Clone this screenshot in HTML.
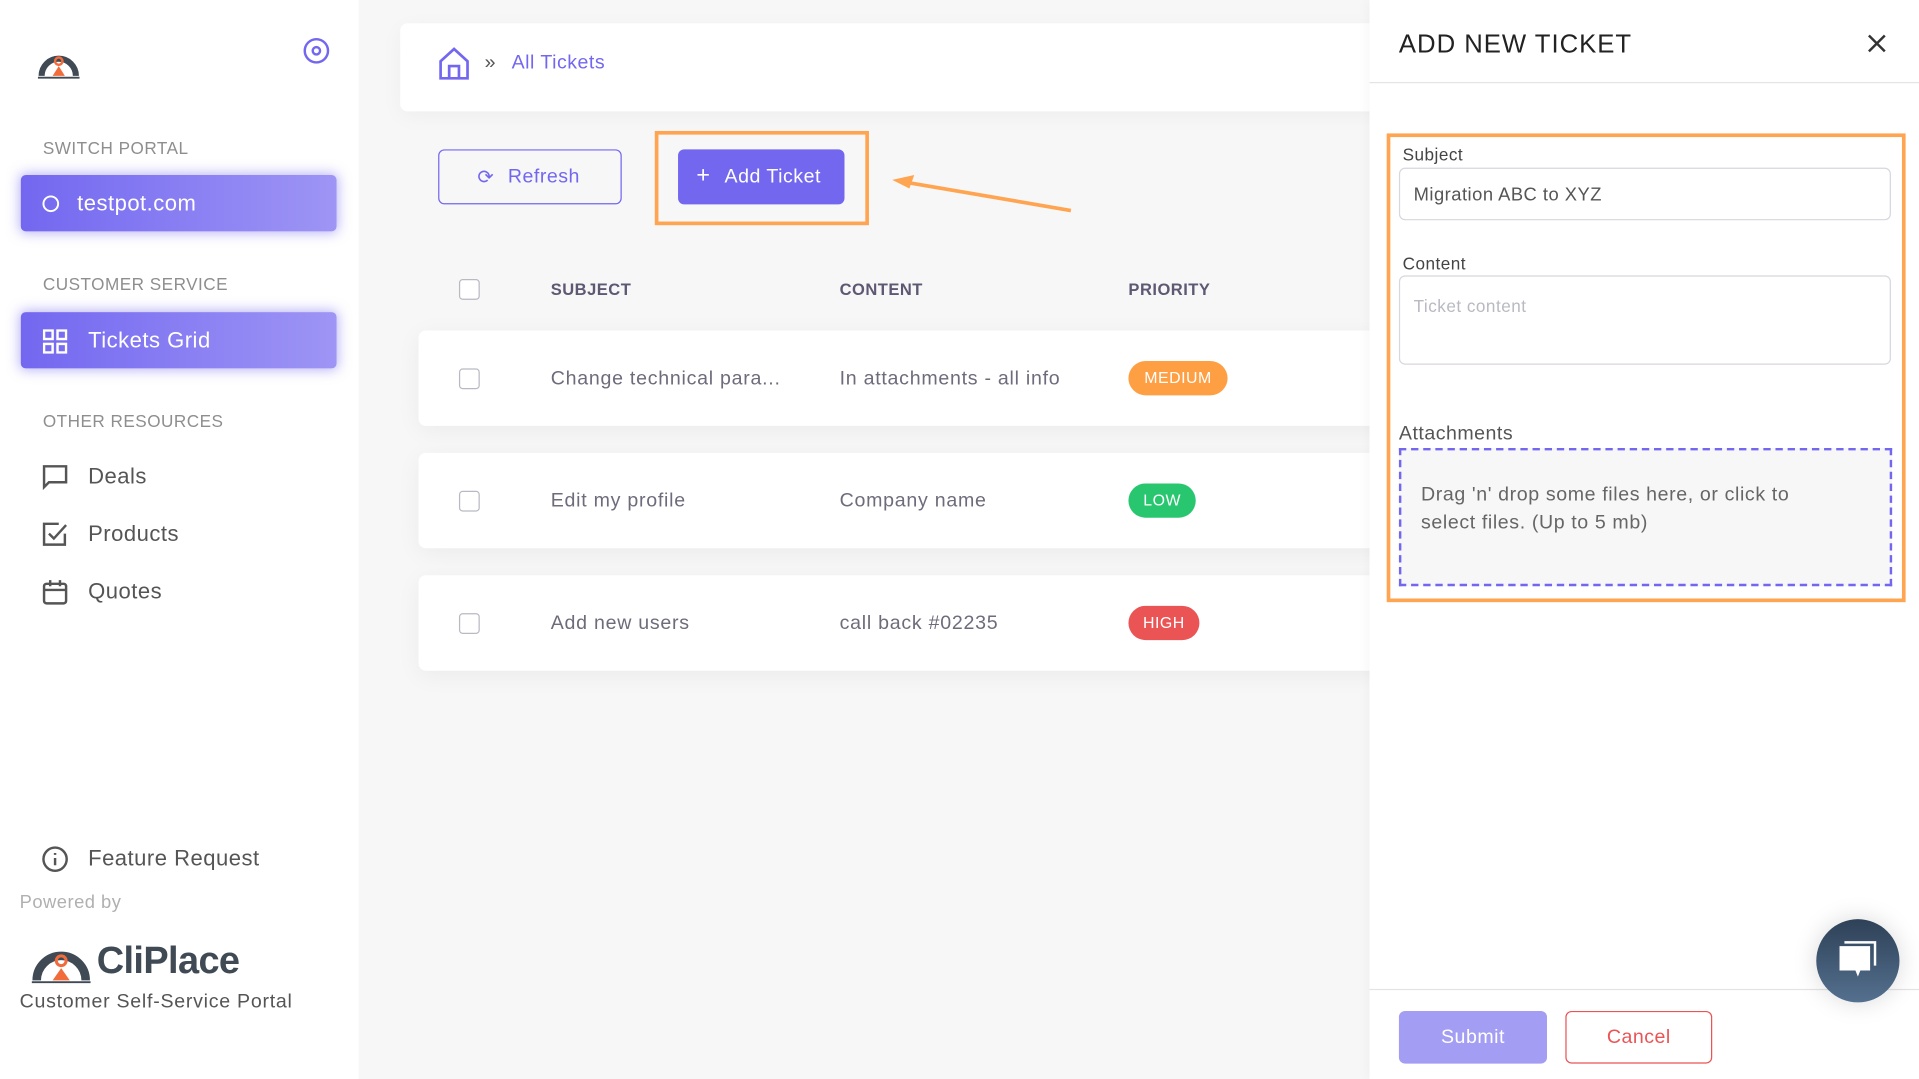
<!DOCTYPE html>
<html><head><meta charset="utf-8"><style>
*{box-sizing:border-box;margin:0;padding:0}
html,body{width:1919px;height:1079px;overflow:hidden;background:#f7f7f7}
#s{position:absolute;left:0;top:0;width:1568px;height:882px;transform:scale(1.2239);transform-origin:0 0;font-family:"Liberation Sans",sans-serif;color:#444;letter-spacing:.4px}
.a{position:absolute}
.side{left:0;top:0;width:293px;height:882px;background:#fff}
.lab{font-size:14px;color:#8e8e8e;letter-spacing:.4px}
.pill{left:17px;width:258px;height:46px;border-radius:4px;background:linear-gradient(90deg,#7367f0,#9e95f5);box-shadow:0 0 10px 1px rgba(115,103,240,.5);color:#fff;font-size:18px}
.nav{font-size:18px;color:#555}
.card{background:#fff;border-radius:6px}
.cb{width:17px;height:17px;border:1.5px solid #b9b9c3;border-radius:3px;background:#fff}
.cell{font-size:16px;color:#6e6b7b;letter-spacing:.6px}
.th{font-size:13.5px;font-weight:bold;color:#5e5873;letter-spacing:.4px}
.badge{height:28px;border-radius:14px;color:#fff;font-size:13px;line-height:28px;text-align:center}
</style></head><body><div id="s">
<div class="a side"></div>
<svg class="a" style="left:30px;top:39px" width="36" height="26" viewBox="0 0 36 26"><path d="M4 23 A14 14 0 0 1 32 23" fill="none" stroke="#3f4a55" stroke-width="5"/><circle cx="18" cy="11" r="3" fill="none" stroke="#f26b3a" stroke-width="2"/><path d="M13 23 L18 15 L23 23Z" fill="#f26b3a"/><path d="M1 24.5 H35" stroke="#3f4a55" stroke-width="1.5"/></svg>
<svg class="a" style="left:247px;top:30px" width="23" height="23" viewBox="0 0 23 23"><circle cx="11.5" cy="11.5" r="9.5" fill="none" stroke="#7367f0" stroke-width="2"/><circle cx="11.5" cy="11.5" r="3" fill="none" stroke="#7367f0" stroke-width="2"/></svg>
<div class="a lab" style="left:35px;top:113px">SWITCH PORTAL</div>
<div class="a pill" style="top:143px"><svg class="a" style="left:17px;top:16px" width="15" height="15"><circle cx="7.5" cy="7.5" r="6" fill="none" stroke="#fff" stroke-width="1.6"/></svg><span class="a" style="left:46px;top:13px">testpot.com</span></div>
<div class="a lab" style="left:35px;top:224px">CUSTOMER SERVICE</div>
<div class="a pill" style="top:255px"><svg class="a" style="left:18px;top:14px" width="20" height="20" fill="none" stroke="#fff" stroke-width="2"><rect x="1" y="1" width="7" height="7"/><rect x="12" y="1" width="7" height="7"/><rect x="1" y="12" width="7" height="7"/><rect x="12" y="12" width="7" height="7"/></svg><span class="a" style="left:55px;top:13px">Tickets Grid</span></div>
<div class="a lab" style="left:35px;top:336px">OTHER RESOURCES</div>
<svg class="a" style="left:34px;top:379px" width="22" height="22" fill="none" stroke="#555" stroke-width="2"><path d="M2 2H20V15H6L2 19Z"/></svg>
<div class="a nav" style="left:72px;top:379px">Deals</div>
<svg class="a" style="left:34px;top:426px" width="22" height="22" fill="none" stroke="#555" stroke-width="2"><path d="M19 10V19H2V2H14"/><path d="M6 10L10 14L20 3"/></svg>
<div class="a nav" style="left:72px;top:426px">Products</div>
<svg class="a" style="left:34px;top:473px" width="22" height="22" fill="none" stroke="#555" stroke-width="2"><rect x="2" y="4" width="18" height="16" rx="2"/><path d="M2 9H20M7 1V6M15 1V6"/></svg>
<div class="a nav" style="left:72px;top:473px">Quotes</div>
<svg class="a" style="left:34px;top:691px" width="22" height="22" fill="none" stroke="#555" stroke-width="2"><circle cx="11" cy="11" r="9.5"/><path d="M11 10V16M11 6V7.5"/></svg>
<div class="a nav" style="left:72px;top:691px">Feature Request</div>
<div class="a" style="left:16px;top:729px;font-size:15px;color:#b0b0b0">Powered by</div>
<svg class="a" style="left:24px;top:767px" width="52" height="38" viewBox="0 0 52 38"><path d="M6 34 A20 20 0 0 1 46 34" fill="none" stroke="#3f4a55" stroke-width="7"/><circle cx="26" cy="18" r="4" fill="none" stroke="#f26b3a" stroke-width="2.5"/><path d="M19 34 L26 24 L33 34Z" fill="#f26b3a"/><path d="M2 35.5H50" stroke="#3f4a55" stroke-width="1.5"/></svg>
<div class="a" style="left:79px;top:767px;font-size:31px;font-weight:bold;color:#3f4a55;letter-spacing:-.5px">CliPlace</div>
<div class="a" style="left:16px;top:810px;font-size:16px;color:#555;letter-spacing:.6px">Customer Self-Service Portal</div>

<div class="a card" style="left:327px;top:19px;width:820px;height:72px;box-shadow:0 4px 18px rgba(0,0,0,.04)"></div>
<svg class="a" style="left:358px;top:38px" width="26" height="28" fill="none" stroke="#7367f0" stroke-width="2.2"><path d="M2 12L13 2L24 12V26H2Z"/><path d="M9 26V16H17V26"/></svg>
<div class="a" style="left:396px;top:43px;font-size:16px;color:#555">»</div>
<div class="a" style="left:418px;top:43px;font-size:16px;color:#7367f0">All Tickets</div>
<div class="a" style="left:358px;top:122px;width:150px;height:45px;border:1px solid #7367f0;border-radius:5px;color:#7367f0;font-size:16px"><span class="a" style="left:31px;top:12px">⟳</span><span class="a" style="left:56px;top:13px">Refresh</span></div>
<div class="a" style="left:535px;top:107px;width:175px;height:77px;border:3px solid #ffa552"></div>
<div class="a" style="left:554px;top:122px;width:136px;height:45px;background:#7367f0;border-radius:5px;color:#fff;font-size:16px"><span class="a" style="left:15px;top:11px;font-size:19px">+</span><span class="a" style="left:38px;top:14px">Add Ticket</span></div>
<svg class="a" style="left:725px;top:138px" width="155" height="40"><path d="M150 34L10 10" stroke="#ffa552" stroke-width="3"/><path d="M4 9L22 5L18 16Z" fill="#ffa552"/></svg>
<div class="a cb" style="left:375px;top:228px"></div>
<div class="a th" style="left:450px;top:229px">SUBJECT</div>
<div class="a th" style="left:686px;top:229px">CONTENT</div>
<div class="a th" style="left:922px;top:229px">PRIORITY</div>
<div class="a card" style="left:342px;top:270px;width:800px;height:78px;box-shadow:0 4px 20px rgba(0,0,0,.05)"></div>
<div class="a card" style="left:342px;top:370px;width:800px;height:78px;box-shadow:0 4px 20px rgba(0,0,0,.05)"></div>
<div class="a card" style="left:342px;top:470px;width:800px;height:78px;box-shadow:0 4px 20px rgba(0,0,0,.05)"></div>
<div class="a cb" style="left:375px;top:301px"></div><div class="a cell" style="left:450px;top:301px">Change technical para...</div><div class="a cell" style="left:686px;top:301px">In attachments - all info</div><div class="a badge" style="left:922px;top:295px;width:81px;background:#ff9f43">MEDIUM</div>
<div class="a cb" style="left:375px;top:401px"></div><div class="a cell" style="left:450px;top:401px">Edit my profile</div><div class="a cell" style="left:686px;top:401px">Company name</div><div class="a badge" style="left:922px;top:395px;width:55px;background:#28c76f">LOW</div>
<div class="a cb" style="left:375px;top:501px"></div><div class="a cell" style="left:450px;top:501px">Add new users</div><div class="a cell" style="left:686px;top:501px">call back #02235</div><div class="a badge" style="left:922px;top:495px;width:58px;background:#ea5455">HIGH</div>

<div class="a" style="left:1119px;top:0;width:449px;height:882px;background:#fff;box-shadow:-3px 0 8px rgba(0,0,0,.03)"></div>
<div class="a" style="left:1143px;top:25px;font-size:21px;color:#222;letter-spacing:.8px">ADD NEW TICKET</div>
<svg class="a" style="left:1526px;top:28px" width="15" height="15" stroke="#333" stroke-width="2"><path d="M1 1L14 14M14 1L1 14"/></svg>
<div class="a" style="left:1119px;top:67px;width:449px;height:1px;background:#e4e4e4"></div>
<div class="a" style="left:1133px;top:109px;width:424px;height:383px;border:3px solid #ffa552"></div>
<div class="a" style="left:1146px;top:118px;font-size:14px;color:#444">Subject</div>
<div class="a" style="left:1143px;top:137px;width:402px;height:43px;border:1px solid #d8d6de;border-radius:5px"></div>
<div class="a" style="left:1155px;top:151px;font-size:15px;color:#555">Migration ABC to XYZ</div>
<div class="a" style="left:1146px;top:207px;font-size:14px;color:#444">Content</div>
<div class="a" style="left:1143px;top:225px;width:402px;height:73px;border:1px solid #d8d6de;border-radius:5px"></div>
<div class="a" style="left:1155px;top:242px;font-size:14px;color:#b9b9c3">Ticket content</div>
<div class="a" style="left:1143px;top:346px;font-size:16px;color:#555">Attachments</div>
<div class="a" style="left:1143px;top:366px;width:403px;height:113px;border:2px dashed #7367f0;background:#f7f7f7"></div>
<div class="a" style="left:1161px;top:393px;width:340px;font-size:16px;line-height:23px;color:#666;letter-spacing:.5px">Drag 'n' drop some files here, or click to select files. (Up to 5 mb)</div>
<div class="a" style="left:1119px;top:808px;width:449px;height:1px;background:#e4e4e4"></div>
<div class="a" style="left:1143px;top:826px;width:121px;height:43px;border-radius:5px;background:#a49df4;color:#fff;font-size:16px;text-align:center;line-height:43px">Submit</div>
<div class="a" style="left:1279px;top:826px;width:120px;height:43px;border-radius:5px;border:1px solid #ea5455;color:#ea5455;font-size:16px;text-align:center;line-height:41px">Cancel</div>
<div class="a" style="left:1484px;top:751px;width:68px;height:68px;border-radius:50%;background:linear-gradient(#2e4157,#54708f);box-shadow:0 0 20px rgba(0,0,0,.15)"></div>
<svg class="a" style="left:1500px;top:767px" width="38" height="36"><path d="M7 3H32V22" fill="none" stroke="#fff" stroke-width="2"/><path d="M3 6H28V26H20L18 31L16 26H3Z" fill="#fff"/></svg>
</div></body></html>
